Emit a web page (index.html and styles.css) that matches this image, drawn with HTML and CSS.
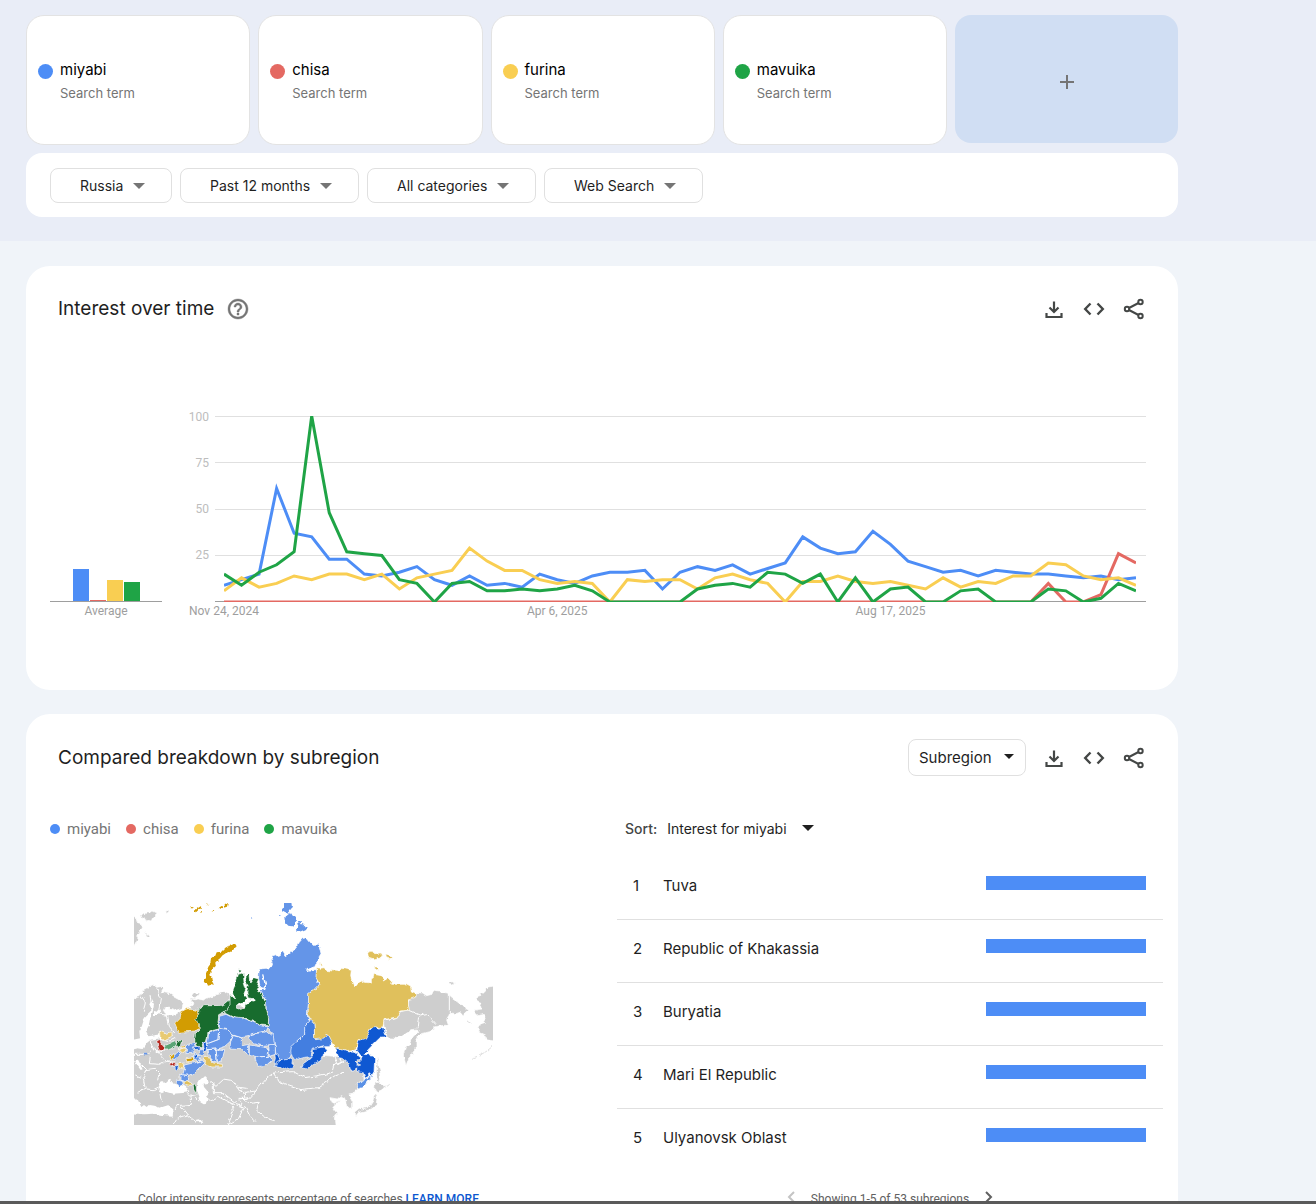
FILE: index.html
```html
<!DOCTYPE html>
<html lang="en">
<head>
<meta charset="utf-8">
<title>Trends: compare search terms</title>
<meta name="viewport" content="width=device-width, initial-scale=1">
<link rel="stylesheet" href="styles.css">
</head>
<body>
<svg class="sprite" aria-hidden="true">
  <symbol id="i-download" viewBox="0 0 24 24"><path d="M12 4.500v10M7.500 10.500l4.500 4.500 4.500-4.500M4.500 16v4h15v-4" fill="none" stroke="currentColor" stroke-width="2.200"/></symbol>
  <symbol id="i-code" viewBox="0 0 24 24"><path d="M8.500 6.500L3.200 12l5.300 5.500M15.500 6.500l5.300 5.500-5.300 5.500" fill="none" stroke="currentColor" stroke-width="2.400"/></symbol>
  <symbol id="i-share" viewBox="0 0 24 24"><g fill="none" stroke="currentColor" stroke-width="2"><circle cx="18.500" cy="5" r="2.200"/><circle cx="5" cy="12" r="2.200"/><circle cx="18.500" cy="19" r="2.200"/><path d="M7 11l9.500-5M7 13l9.500 5"/></g></symbol>
</svg>
<main class="page">
  <header class="top">
    <div class="terms">
      <div class="term"><i class="dot blue"></i><div><p class="term-name">miyabi</p><p class="term-kind">Search term</p></div></div>
      <div class="term"><i class="dot red"></i><div><p class="term-name">chisa</p><p class="term-kind">Search term</p></div></div>
      <div class="term"><i class="dot yellow"></i><div><p class="term-name">furina</p><p class="term-kind">Search term</p></div></div>
      <div class="term"><i class="dot green"></i><div><p class="term-name">mavuika</p><p class="term-kind">Search term</p></div></div>
      <button class="add" type="button" aria-label="Add comparison"><svg width="14" height="14" viewBox="0 0 14 14"><path d="M7 0v14M0 7h14" stroke="#757575" stroke-width="2"/></svg></button>
    </div>
    <div class="filters">
      <span class="pick"><select aria-label="Region"><option>Russia</option></select></span>
      <span class="pick"><select aria-label="Time range"><option>Past 12 months</option></select></span>
      <span class="pick"><select aria-label="Category"><option>All categories</option></select></span>
      <span class="pick"><select aria-label="Search type"><option>Web Search</option></select></span>
    </div>
  </header>

  <section class="card time">
    <div class="card-head">
      <h2>Interest over time</h2>
      <button class="help" type="button" aria-label="Help"><svg viewBox="0 0 24 24" width="24" height="24"><path fill="currentColor" stroke="currentColor" stroke-width=".4" d="M11 18h2v-2h-2v2zm1-16C6.480 2 2 6.480 2 12s4.480 10 10 10 10-4.480 10-10S17.520 2 12 2zm0 18c-4.410 0-8-3.590-8-8s3.590-8 8-8 8 3.590 8 8-3.590 8-8 8zm0-14c-2.210 0-4 1.790-4 4h2c0-1.100.9-2 2-2s2 .9 2 2c0 2-3 1.750-3 5h2c0-2.250 3-2.500 3-5 0-2.210-1.790-4-4-4z"/></svg></button>
      <div class="tools">
        <button type="button" aria-label="Download"><svg><use href="#i-download"/></svg></button>
        <button type="button" aria-label="Embed"><svg><use href="#i-code"/></svg></button>
        <button type="button" aria-label="Share"><svg><use href="#i-share"/></svg></button>
      </div>
    </div>
    <div class="chart">
      <div class="average">
        <div class="avg-bars">
          <i class="blue" style="height:32px"></i><i class="red" style="height:1px"></i><i class="yellow" style="height:21px"></i><i class="green" style="height:19px"></i>
        </div>
        <p>Average</p>
      </div>
      <svg class="plot" role="img" aria-label="Interest over time, November 2024 to November 2025">
        <g class="grid">
          <line x1="0" x2="100%" y1="0.500" y2="0.500"/>
          <line x1="0" x2="100%" y1="46.500" y2="46.500"/>
          <line x1="0" x2="100%" y1="93.500" y2="93.500"/>
          <line x1="0" x2="100%" y1="139.500" y2="139.500"/>
          <line class="axis" x1="0" x2="100%" y1="185.500" y2="185.500"/>
        </g>
        <g class="ylab">
          <text x="-6" y="5">100</text><text x="-6" y="51">75</text><text x="-6" y="97">50</text><text x="-6" y="143">25</text>
        </g>
        <svg class="series" x="9" y="0" height="186" viewBox="0 -100 52 100" preserveAspectRatio="none">
          <g transform="scale(1,-1)">
            <polyline stroke="#4d8df6" points="0,9 1,12 2,15 3,61 4,37 5,35 6,23 7,23 8,15 9,14 10,16 11,19 12,12 13,9 14,14 15,9 16,10 17,8 18,15 19,12 20,10 21,14 22,16 23,16 24,17 25,7 26,16 27,19 28,17 29,20 30,15 31,18 32,21 33,35 34,29 35,26 36,27 37,38 38,31 39,22 40,19 41,16 42,17 43,14 44,17 45,16 46,15 47,15 48,14 49,13 50,14 51,12 52,13"/>
            <polyline stroke="#e46962" points="0,0 46,0 47,10 48,0 49,0 50,4 51,26 52,21"/>
            <polyline stroke="#f9ce52" points="0,6 1,13 2,8 3,10 4,14 5,12 6,15 7,15 8,12 9,15 10,7 11,13 12,15 13,17 14,29 15,22 16,17 17,17 18,12 19,10 20,11 21,10 22,0 23,12 24,11 25,12 26,12 27,7 28,13 29,15 30,12 31,10 32,0 33,11 34,11 35,14 36,11 37,10 38,11 39,9 40,7 41,13 42,8 43,11 44,10 45,14 46,14 47,21 48,20 49,14 50,12 51,13 52,9"/>
            <polyline stroke="#1fa446" points="0,15 1,9 2,16 3,20 4,27 5,100 6,48 7,27 8,26 9,25 10,12 11,10 12,0 13,10 14,11 15,6 16,6 17,7 18,6 19,7 20,9 21,6 22,0 26,0 27,7 28,9 29,10 30,8 31,16 32,15 33,10 34,15 35,0 36,13 37,0 38,7 39,8 40,0 41,0 42,6 43,7 44,0 46,0 47,7 48,6 49,0 50,2 51,10 52,6"/>
          </g>
        </svg>
        <svg class="xlab" x="9" y="0" height="210">
          <text x="0" y="199">Nov 24, 2024</text><text x="36.540%" y="199">Apr 6, 2025</text><text x="73.080%" y="199">Aug 17, 2025</text>
        </svg>
      </svg>
    </div>
  </section>

  <section class="card region">
    <div class="card-head">
      <h2>Compared breakdown by subregion</h2>
      <div class="tools">
        <span class="pick sub"><select aria-label="Resolution"><option>Subregion</option></select></span>
        <button type="button" aria-label="Download"><svg><use href="#i-download"/></svg></button>
        <button type="button" aria-label="Embed"><svg><use href="#i-code"/></svg></button>
        <button type="button" aria-label="Share"><svg><use href="#i-share"/></svg></button>
      </div>
    </div>
    <div class="split">
      <div class="map-side">
        <ul class="legend">
          <li><i class="blue"></i>miyabi</li><li><i class="red"></i>chisa</li><li><i class="yellow"></i>furina</li><li><i class="green"></i>mavuika</li>
        </ul>
        <svg class="map" viewBox="12 24 1077 666" role="img" aria-label="Map of Russia by leading search term">
          <filter id="coast" x="0" y="0" width="1" height="1" color-interpolation-filters="sRGB">
            <feTurbulence type="fractalNoise" baseFrequency="0.050" numOctaves="3" seed="4"/>
            <feDisplacementMap in="SourceGraphic" scale="14" xChannelSelector="R" yChannelSelector="G"/>
          </filter>
          <g filter="url(#coast)">
          <g fill="#cecece" stroke="#fff" stroke-width="2" stroke-linejoin="round">
            <path d="M-10 322L22 304 30 302 38 288 50 282 58 274 72 268 80 274 92 272 100 280 94 290 106 294 118 296 132 306 150 316 160 328 156 340 138 346 120 340 104 338 100 346 108 358 122 362 140 356 152 348 176 344 186 334 192 326 182 318 180 312 196 314 208 312 222 316 240 304 262 298 284 290 302 300 300 330 400 340 540 330 560 480 700 490 702 558 694 566 690 580 678 586 668 598 656 600 668 622 668 638 654 640 650 618 646 608 634 602 622 612 600 608 602 614 616 622 630 616 612 634 610 644 620 656 616 668 620 710-10 710z"/>
            <path d="M-10 60L24 72 20 82 34 86 38 98 28 104 30 114 20 122 24 132 16 148-10 152zM30 60L40 54 46 60 52 50 60 52 66 48 78 54 76 64 68 68 64 78 54 76 48 80 42 70 34 70zM46 112L56 120 62 128 52 128zM106 52l6-6 6 2-6 6zM188 304l8-10 14 0-6 10-10 8z"/>
            <path d="M860 293L878 294 890 302 906 298 908 288 920 290 956 294 962 304 978 316 984 326 1000 330 1006 342 1014 346 1004 354 1000 364 990 352 978 356 964 354 956 362 950 372 956 390 932 392 915 396 912 404 896 410 874 416 866 424 858 440 858 464 848 478 838 484 828 512 820 480 826 460 840 446 850 424 866 410 862 402 846 404 828 416 812 426 800 430 768 428 760 378 802 366 808 350 834 346 836 316z"/>
            <path d="M1110 270L1074 276 1062 290 1052 296 1056 304 1038 310 1046 318 1056 322 1052 334 1054 342 1036 344 1032 352 1042 362 1064 358 1068 366 1060 378 1066 386 1042 394 1050 400 1046 412 1064 420 1068 432 1110 436zM954 266l12-6 8 4-8 6-12-2zM740 484l5 12 2 22 6 22-4 22-6-4-4-30 3-20zM735 564l10-2 14 14 10-2-16 12-12 4-7-8zM736 594l6 10-4 26-14 12-22 6-16 4-8 10-4-8 12-10 22-6 14-8 10-16z"/>
          </g>
          <path class="water" d="M44 366L66 344 58 328 64 318 72 330 68 350 60 372 56 392 48 408 56 424 90 418 94 430 62 434 48 446 38 462 24 460 -10 468 -10 438 30 430 28 408 36 392zM72 348l10 2 8-6 4 4-10 12-12 0z"/>
          <path class="water" d="M84 590L88 570 96 558 106 564 112 552 124 548 120 560 136 564 144 574 158 570 172 580 178 590 162 594 130 596 110 590 92 594zM202 568L210 554 222 544 230 550 234 564 220 566 222 576 234 590 228 600 236 612 230 626 218 628 208 622 210 610 204 594 200 580zM-10 598L24 616 34 636 42 630 50 636 56 630 70 632 90 638 116 630 130 640 128 662 96 660 72 656 40 658-10 654zM196 672l10-2 14 12-8 6zM12 496l14 18 6 8 6-2-14-26z"/>
          <path class="lines" d="M34 302L46 320 40 350M60 300l4 28M80 280l14 30 -6 48M88 358l24 2 6 34 16 20M90 430l30 8 16-8M60 436l10 28 20 8 22-10M12 478l40 0 10-14M62 480l-4 26 30 2 20-10 20 6M12 506l20 0 18 18 26-4 14 14-4 22M50 524l-8 26 -26-10M40 552l6 30 24 2 16-8M46 582l-20 10M70 464l20 10 16 24 30 0M90 596l4 24M170 594l14 14 0 20-42 4M180 600l18 4 10 16M140 632l-12 26M152 634l20 26 28 22M172 660l-30 10-12 20M240 560l18 14 24-22 24 4 14 20 30 4M250 570l0 26 28 0 36 28 12-12 34-4M236 616l30-12 40 22 4 24-16 40M306 626l40 10 12 24 20 20M320 578l24 14 34-4 34-40 18-14M350 590l-10 16 16 20 28-4M378 588l-20 22-32 0M386 622l-6 24 24 20 30 8M326 614l14 26-14 30-34 20M430 534l60-4 34 18 40-6 44-10 6-22 20-8-4-14M430 534l20 30 60 20 54-6 54-36 24-10M598 450l24 60 20-12M958 296l0 68M836 346l32 14 22-4 28 30M866 364l-4 34"/>
          <g stroke="#fff" stroke-width="2" stroke-linejoin="round">
            <path fill="#6495e8" d="M388 222L424 218 428 206 424 194 432 184 446 180 458 170 466 182 478 174 490 168 500 156 508 142 520 128 528 126 538 138 546 148 562 148 572 158 576 176 570 186 572 194 558 204 552 216 530 226 558 224 568 246 560 262 568 270 558 282 540 292 534 340 532 368 540 380 526 388 524 418 508 434 490 452 482 484 470 492 450 494 438 478 434 452 418 438 418 422 428 418 412 398 416 376 410 356 408 334 400 322 408 314 392 290 400 280 390 270 386 250z"/>
            <path fill="#437ee0" d="M540 365L552 378 555 430 574 426 590 416 606 438 602 452 584 452 564 458 550 460 542 488 524 490 510 494 488 488 482 470 484 456 508 434 524 420 524 390 538 380z"/>
            <path fill="#0f58d2" d="M514 518L520 506 536 494 550 480 550 460 584 456 592 470 580 478 578 492 560 502 546 510 530 522zM434 514L440 500 452 494 470 490 490 494 488 518 470 524 450 514zM434 476l10 4 6 14-6 16-12-4 4-16z"/>
            <path fill="#e0c05c" d="M560 218L570 220 582 218 590 226 610 228 628 230 634 220 654 224 664 226 662 242 666 254 674 272 684 270 694 258 706 262 724 264 724 252 730 248 732 238 754 242 762 248 760 258 776 248 784 256 782 268 806 268 826 268 842 276 844 288 860 296 856 310 834 318 838 346 810 348 802 366 762 374 758 398 734 396 720 402 718 426 702 434 684 434 678 466 650 470 616 460 602 438 592 418 574 432 554 434 552 382 534 370 536 292 558 282 568 266 558 248z"/>
            <path fill="#e0c05c" d="M713 176L718 166 728 166 734 176 754 174 758 182 748 190 730 194 716 190zM764 180l22 6 2 6-8 2-14-6zM733 216l12 0 4 7-14 3zM568 202l8 4-5 5z"/>
            <path fill="#0f58d2" d="M720 404L732 394 746 400 758 396 762 414 768 428 748 430 734 444 720 458 702 478 726 480 734 488 732 530 724 544 718 536 706 550 698 530 680 526 680 514 692 510 680 504 698 490 690 480 680 466 686 436 706 430zM616 458L650 470 678 472 686 484 694 488 676 498 682 510 676 524 662 526 656 506 636 490 626 488z"/>
            <path fill="#5b91e6" d="M678 566L696 562 708 550 722 540 722 548 708 566 698 578 684 582z"/>
            <path fill="#186c2e" d="M206 338L224 332 268 332 286 326 300 314 304 328 286 352 266 362 264 380 268 402 250 406 234 414 230 438 220 444 214 460 198 452 194 438 196 416 208 404 194 376 198 352z"/>
            <path fill="#186c2e" d="M322 238L340 234 342 262 348 282 342 296 352 310 344 322 330 328 318 338 328 346 344 342 350 326 362 320 372 322 372 314 354 312 350 290 354 274 346 252 352 238 360 240 362 262 372 248 386 252 380 266 388 276 380 284 396 296 406 318 408 346 416 370 414 392 390 390 348 370 328 374 308 366 284 354 300 330 300 298 312 308 306 288 312 272zM326 224l8 2-2 7-6-2z"/>
            <path fill="#6495e8" d="M268 364L288 358 308 368 348 372 392 392 412 396 410 408 372 414 356 424 334 428 310 420 290 404 268 400zM236 414L266 402 264 434 232 446zM266 402L292 406 310 422 300 440 284 454 260 462 232 464 232 446 264 434zM310 422L334 428 334 450 356 446 356 484 334 464 300 462 302 440zM364 418L412 410 430 424 434 450 400 454 370 446 356 428zM358 450L400 456 416 462 414 484 380 486 358 480zM374 486L418 484 428 494 412 508 396 516 380 508zM416 448l20 4 0 26-18 6zM234 464L258 462 262 502 246 496 238 482zM258 462L284 464 276 498 262 502z"/>
            <path fill="#d29c02" d="M150 350L162 344 178 340 206 348 206 360 198 370 208 400 196 408 146 412 134 384 146 372 154 364zM160 454l8-4 0 6-16 4zM118 482l10-8 8 4-8 14-10-2zM168 488l22-2 2 12-22 2z"/>
            <path fill="#e8ca72" d="M88 408l20 8 18-6 0 14-22 10-14-6zM144 464l22-6 2 8-14 8zM144 506l20-2 0 12-10 8-10-8z"/>
            <path fill="#e0c05c" d="M224 486l14 4 12 14 24 4 0 8-28 0-24-8zM162 562l8-6 16 10-4 8-14-2z"/>
            <path fill="#b3261e" d="M80 438l8-4 6 12 10 12-2 10-14-2zM120 506l12-4 8 6-14 4z"/>
            <path fill="#5ba576" d="M104 452l28-12 10 8-14 12-20 6z"/>
            <path fill="#186c2e" d="M142 436l16 2-4 14-8 8-8-8zM186 568l10 6 0 14 6 10-8-4-6-14z"/>
            <path fill="#6495e8" d="M170 450l22-8 4 14-8 18-20 2zM126 488l16-16 8 8-10 12zM166 510l18-4 20-6 14-4 4 8-14 14-16 16-14 6-20 0 4-14zM150 538l24 4 2 12-12 6-14-4zM140 556l18 2 2 12-12 4-10-6zM190 476l24 6-6 18-16-6zM208 462l18-2-4 20-16-4z"/>
            <path fill="#0f58d2" d="M220 446l12-6 0 26-10-4zM190 456l16-2 2 8-16 2zM190 484l12-6 6 6-8 6zM128 514l16-2 6 8-10 4z"/>
          </g>
          <path fill="#6495e8" d="M462 4L482 4 486 38 480 46 476 56 464 50 456 46 458 40 462 38zM466 66L480 54 486 64 496 66 498 84 488 94 478 92 468 82zM504 78L512 78 514 88 522 88 530 98 524 106 510 112 500 114 498 104 508 94zM40 476l8 0 6 4-10 2zM363 70l4 2-2 3zM448 58l5 0 2 4-6 0z"/>
          <path fill="#d29c02" d="M302 150L314 144 320 154 310 164 298 170 288 174 276 182 268 192 256 202 258 212 250 220 242 228 238 240 244 248 246 262 252 272 242 270 234 272 230 262 220 258 228 246 228 232 236 214 244 204 246 190 256 182 260 172 274 170 282 162zM182 36l12 1-2 3-10 0zM200 42l12-8 4 4-10 6-8 8-6-2zM232 28l6 3-4 4zM264 38l12-8 4 8-10 4zM284 28l12-4-2 8-10 3zM244 48l12-1-2 4zM210 48l6 0-4 6z"/>
          <path class="lines thin" d="M398 238l8 30-6 18M530 226l20-8"/>
          <path fill="none" stroke="#cecece" stroke-width="2" d="M1026 490l16-6M1050 480l18-10 20-16M1008 378l14 6M768 574l8-6"/>
          </g>
        </svg>
        <p class="note">Color intensity represents percentage of searches <a href="#more">LEARN MORE</a></p>
      </div>
      <div class="list-side">
        <div class="sort"><label for="sort">Sort:</label><span class="pick plain"><select id="sort"><option>Interest for miyabi</option></select></span></div>
        <table>
          <tr><td class="rank">1</td><td>Tuva</td><td class="bar"><i></i></td></tr>
          <tr><td class="rank">2</td><td>Republic of Khakassia</td><td class="bar"><i></i></td></tr>
          <tr><td class="rank">3</td><td>Buryatia</td><td class="bar"><i></i></td></tr>
          <tr><td class="rank">4</td><td>Mari El Republic</td><td class="bar"><i></i></td></tr>
          <tr><td class="rank">5</td><td>Ulyanovsk Oblast</td><td class="bar"><i></i></td></tr>
        </table>
        <div class="pager">
          <button type="button" aria-label="Previous" disabled><svg width="8" height="12" viewBox="0 0 8 12"><path d="M7 1L2 6l5 5" fill="none" stroke="#c4c4c4" stroke-width="2"/></svg></button>
          <span>Showing 1-5 of 53 subregions</span>
          <button type="button" aria-label="Next"><svg width="8" height="12" viewBox="0 0 8 12"><path d="M1 1l5 5-5 5" fill="none" stroke="#616161" stroke-width="2"/></svg></button>
        </div>
      </div>
    </div>
  </section>
</main>
<div class="edge"></div>
</body>
</html>
```
FILE: styles.css
```css
* { box-sizing: border-box; }
body {
  margin: 0;
  height: 100vh;
  display: flex;
  flex-direction: column;
  background: #f0f4f9;
  color: #1f1f1f;
  font-family: Inter, "Liberation Sans", sans-serif;
  font-size: 14px;
}
p, h2, ul { margin: 0; padding: 0; }
button { border: 0; padding: 0; background: none; color: inherit; font: inherit; }
.sprite { position: absolute; width: 0; height: 0; }
.page { flex: 1; min-height: 0; overflow: hidden; }
.edge { flex: none; height: 3px; background: #5a5a5a; }

.blue { background: #4d8df6; }
.red { background: #e46962; }
.yellow { background: #f9ce52; }
.green { background: #1fa446; }

.top { background: #e9edf7; padding: 15px 138px 24px 26px; }
.terms { display: grid; grid-template-columns: repeat(4, 1fr) 223px; gap: 8px; }
.term {
  display: flex;
  align-items: flex-start;
  gap: 7px;
  height: 130px;
  padding: 43px 11px 0;
  background: #fff;
  border: 1px solid #e3e3e3;
  border-radius: 18px;
}
.dot { width: 15px; height: 15px; margin-top: 5px; border-radius: 50%; }
.term-name { font-size: 15px; line-height: 22px; color: #000; }
.term-kind { font-size: 13px; line-height: 24px; color: #757575; }
.add { height: 128px; padding-top: 8px; background: #d0def3; border-radius: 16px; }
.filters {
  display: flex;
  gap: 8px;
  margin-top: 8px;
  padding: 15px 24px 14px;
  background: #fff;
  border-radius: 16px;
}

.pick { position: relative; display: inline-flex; }
.pick select {
  appearance: none;
  height: 35px;
  padding: 0 47px 0 29px;
  background: #fff;
  border: 1px solid #e0e0e0;
  border-radius: 8px;
  color: #1f1f1f;
  font: 14px Inter, "Liberation Sans", sans-serif;
}
.pick::after {
  content: "";
  position: absolute;
  right: 27px;
  top: 15px;
  border: solid transparent;
  border-width: 6px 6px 0;
  border-top-color: #757575;
  pointer-events: none;
}
.sub select { height: 37px; padding: 0 33px 0 10px; font-size: 15px; }
.sub::after { right: 12px; top: 15px; border-width: 5px 5px 0; border-top-color: #1f1f1f; }
.plain select { height: 24px; padding: 0 27px 0 0; border: 0; }
.plain::after { right: 0; top: 9px; border-top-color: #1f1f1f; }

.card { margin: 25px 138px 0 26px; background: #fff; border-radius: 24px; }
.card-head { display: flex; align-items: center; padding: 25px 32px 0; min-height: 61px; }
h2 { font-size: 19px; font-weight: 400; line-height: 24px; }
.help { display: flex; margin-left: 12px; color: #757575; }
.tools { display: flex; align-items: center; gap: 16px; margin-left: auto; color: #444746; }
.tools button, .tools svg { display: block; width: 24px; height: 24px; }

.time { height: 424px; }
.chart { display: flex; padding: 89px 32px 0 24px; }
.average { flex: none; width: 112px; margin-right: 53px; padding-top: 153px; }
.avg-bars {
  display: flex;
  align-items: flex-end;
  justify-content: center;
  gap: 1px;
  height: 33px;
  border-bottom: 1px solid #9e9e9e;
}
.avg-bars i { width: 16px; }
.average p { font: 12px/18px Roboto, sans-serif; color: #9e9e9e; text-align: center; }
.plot { flex: 1; min-width: 0; height: 210px; overflow: visible; font: 12px Roboto, sans-serif; }
.grid line { stroke: #e0e0e0; }
.grid .axis { stroke: #9e9e9e; }
.ylab text { fill: #bdbdbd; text-anchor: end; }
.series, .xlab { width: calc(100% - 19px); }
.series { overflow: hidden; }
.series polyline { fill: none; stroke-width: 3px; vector-effect: non-scaling-stroke; stroke-miterlimit: 10; }
.xlab { overflow: visible; }
.xlab text { fill: #9e9e9e; text-anchor: middle; }

.region { margin-top: 24px; padding-bottom: 32px; }
.region .card-head { min-height: 62px; }
.split { display: grid; grid-template-columns: 591px 1fr; padding-right: 15px; }
.map-side { padding-left: 24px; }
.legend {
  display: flex;
  gap: 15px;
  margin-top: 41px;
  list-style: none;
  font: 15px/24px Roboto, sans-serif;
  color: #757575;
}
.legend li { display: flex; align-items: center; gap: 7px; }
.legend i { width: 10px; height: 10px; border-radius: 50%; }
.map { display: block; width: 359px; height: 222px; margin: 62px 0 0 84px; }
.water { fill: #fff; }
.lines { fill: none; stroke: #fff; stroke-width: 3px; stroke-linejoin: round; }
.thin { stroke-width: 4px; }
.note { margin: 66px 0 0 88px; font: 12px/16px Roboto, sans-serif; color: #616161; }
.note a { color: #0b57d0; font-weight: 500; text-decoration: none; }
.sort { display: flex; align-items: center; gap: 10px; margin-top: 40px; padding-left: 8px; height: 24px; }
.sort label { color: #444746; font-weight: 500; }
table { width: 100%; margin-top: 16px; border-collapse: collapse; font-size: 15px; }
td { height: 63px; padding: 0 0 4px; border-bottom: 1px solid #e0e0e0; vertical-align: middle; }
tr:last-child td { border: 0; }
.rank { width: 46px; padding-left: 16px; }
.bar { width: 177px; }
.bar i { display: block; width: 160px; height: 14px; margin-bottom: 5px; background: #4d8df6; }
.pager { display: flex; justify-content: center; align-items: center; gap: 16px; margin-top: 20px; font: 12px/16px Roboto, sans-serif; color: #616161; }
```
